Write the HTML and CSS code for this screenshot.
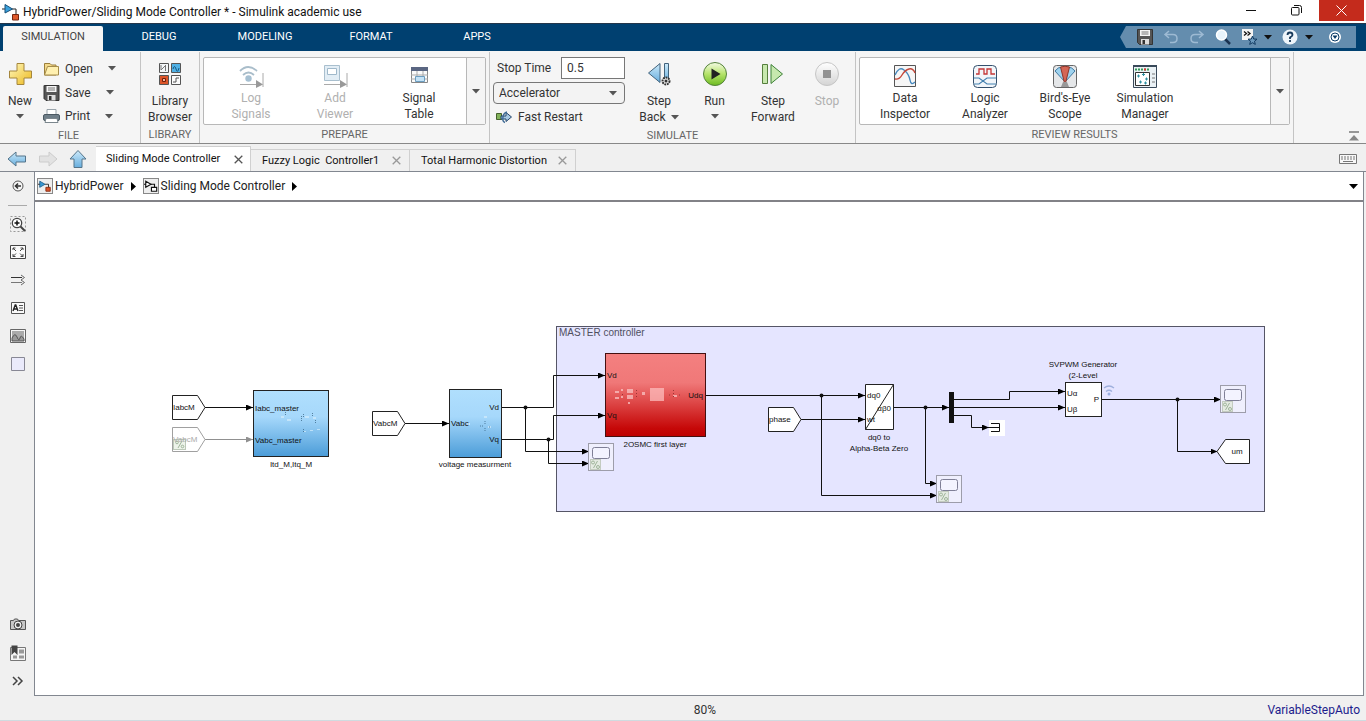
FILE: index.html
```html
<!DOCTYPE html>
<html lang="en">
<head>
<meta charset="utf-8">
<title>HybridPower/Sliding Mode Controller * - Simulink academic use</title>
<link rel="stylesheet" href="styles.css">
</head>
<body>
<svg class="defs" aria-hidden="true">
  <defs>
    <linearGradient id="gBlue" x1="0" y1="0" x2="0" y2="1"><stop offset="0" stop-color="#b0dffd"/><stop offset=".4" stop-color="#a6d8fb"/><stop offset="1" stop-color="#4b9cd8"/></linearGradient>
    <linearGradient id="gRed" x1="0" y1="0" x2="0" y2="1"><stop offset="0" stop-color="#f48080"/><stop offset=".35" stop-color="#f07878"/><stop offset=".9" stop-color="#c60808"/><stop offset="1" stop-color="#bd0000"/></linearGradient>
    <linearGradient id="gGold" x1="0" y1="0" x2="1" y2="1"><stop offset="0" stop-color="#fff9c0"/><stop offset="1" stop-color="#ecb81c"/></linearGradient>
    <linearGradient id="gArrow" x1="0" y1="0" x2="0" y2="1"><stop offset="0" stop-color="#cdeafa"/><stop offset="1" stop-color="#67aede"/></linearGradient>
    <linearGradient id="gRun" x1="0" y1="0" x2="0" y2="1"><stop offset="0" stop-color="#f4fbe4"/><stop offset=".5" stop-color="#b5e36a"/><stop offset="1" stop-color="#6dbb20"/></linearGradient>
    <linearGradient id="gGray" x1="0" y1="0" x2="0" y2="1"><stop offset="0" stop-color="#fff"/><stop offset="1" stop-color="#d4d4d4"/></linearGradient>
    <symbol id="floppy" viewBox="0 0 16 16"><path d="M1 .5h14.500v15H2.500L.5 13.500V.5z" fill="#555" stroke="#333"/><path d="M3 1h10v6H3z" fill="#f4f4f4"/><path d="M4.500 3h7M4.500 5h7" stroke="#777"/><path d="M4 10h8v5.500H4z" fill="#ddd"/><path d="M5.500 11h2.500v4h-2.500z" fill="#333"/></symbol>
    <symbol id="caret" viewBox="0 0 8 5"><path d="M0 0h8L4 4.500z" fill="currentColor"/></symbol>
    <symbol id="x" viewBox="0 0 9 9"><path d="M.7.700l7.600 7.600M8.300.700L.7 8.300" stroke="currentColor" stroke-width="1.300"/></symbol>
    <symbol id="model" viewBox="0 0 16 16"><path d="M2 2.500L8 6l-6 3.500z" fill="#3a9ad4" stroke="#1c5e8c"/><path d="M0 6h2M8 6h4v4" fill="none" stroke="#222"/><path d="M9 9.500h5V14H9z" fill="#d9532c" stroke="#822b10"/></symbol>
    <symbol id="scope" viewBox="0 0 26 29"><rect x=".5" y=".5" width="25" height="27" fill="#efeffd" stroke="#9d9daa"/><rect x="4.500" y="4.500" width="17" height="11" rx="2" fill="#f3f3ff" stroke="#7f7f96"/><rect x="2.500" y="16.500" width="10" height="10" fill="#e4eae2" stroke="#c3cbc0"/><path d="M9.500 18l-4 7" stroke="#9fb59a"/><circle cx="5" cy="19.500" r="1.500" fill="none" stroke="#9fb59a"/><circle cx="10" cy="24" r="1.500" fill="none" stroke="#9fb59a"/></symbol>
    <marker id="head" viewBox="0 0 7 6" refX="7" refY="3" markerWidth="7" markerHeight="6" markerUnits="userSpaceOnUse" orient="auto"><path d="M0 0l7 3-7 3z"/></marker>
    <marker id="headDim" viewBox="0 0 7 6" refX="7" refY="3" markerWidth="7" markerHeight="6" markerUnits="userSpaceOnUse" orient="auto"><path d="M0 0l7 3-7 3z" fill="#909090"/></marker>
  </defs>
</svg>
<div class="app">
  <header class="titlebar">
    <svg class="app-icon" viewBox="0 0 18 18" aria-hidden="true"><path d="M0 6h4M10 6h4v6" fill="none" stroke="#222"/><path d="M3 1.500L10.500 6 3 10z" fill="#39a0dc" stroke="#174f77"/><path d="M10.500 11.500h6V17h-6z" fill="#e05a2c" stroke="#752610"/></svg>
    <h1 class="title">HybridPower/Sliding Mode Controller * - Simulink academic use</h1>
    <div class="window-buttons">
      <button class="win" aria-label="Minimize"><svg width="11" height="11"><path d="M0 5.500h10" stroke="#111"/></svg></button>
      <button class="win" aria-label="Restore"><svg width="11" height="11" fill="none" stroke="#111"><rect x=".5" y="2.500" width="7.500" height="7.500" rx="1"/><path d="M3 .5h5.500q2 0 2 2V8"/></svg></button>
      <button class="win win-close" aria-label="Close"><svg width="11" height="11"><path d="M.5.500l10 10M10.500.500l-10 10" stroke="#fff"/></svg></button>
    </div>
  </header>

  <nav class="tabs" aria-label="Toolstrip">
    <button class="tab tab-active">SIMULATION</button>
    <button class="tab">DEBUG</button>
    <button class="tab">MODELING</button>
    <button class="tab">FORMAT</button>
    <button class="tab">APPS</button>
    <div class="quick">
      <button class="q" aria-label="Save"><svg width="16" height="16"><use href="#floppy"/></svg></button>
      <button class="q" aria-label="Undo"><svg width="16" height="16" fill="none" stroke="#9dbad3" stroke-width="1.500"><path d="M6 2L2 5.500 6 9M2 5.500h8q4 0 4 4t-4 4H7"/></svg></button>
      <button class="q" aria-label="Redo"><svg width="16" height="16" fill="none" stroke="#9dbad3" stroke-width="1.500"><path d="M10 2l4 3.500L10 9M14 5.500H6q-4 0-4 4t4 4h3"/></svg></button>
      <button class="q" aria-label="Search"><svg width="16" height="16"><path d="M10 10l5 5" stroke="#1b3350" stroke-width="2.500"/><circle cx="6.500" cy="6" r="5" fill="#e8f4fc" stroke="#fff" stroke-width="1.500"/></svg></button>
      <button class="q q-menu" aria-label="Favorites"><svg width="16" height="16"><path d="M1 0h11v11H1z" fill="#f4f4f4"/><path d="M3 2.500l2.500 2L3 6.500M6.500 2.500l2.500 2-2.500 2" fill="none" stroke="#111" stroke-width="1.300"/><path d="M11.500 7l1.200 3 3.300.200-2.500 2 .8 3.200-2.800-1.700-2.800 1.700.8-3.200-2.500-2 3.300-.2z" fill="#6c9abd" stroke="#123a60"/></svg><svg class="caret dark"><use href="#caret"/></svg></button>
      <button class="q q-menu" aria-label="Help"><svg width="16" height="16"><circle cx="8" cy="8" r="7.500" fill="#eef5fa"/><path d="M5.500 6q0-2.500 2.500-2.500T10.500 6Q10.500 7 8 8.500V10M8 11v2" fill="none" stroke="#173a5b" stroke-width="1.800"/></svg><svg class="caret dark"><use href="#caret"/></svg></button>
      <button class="q" aria-label="Toolstrip options"><svg width="14" height="14"><circle cx="7" cy="7" r="6" fill="#fff"/><circle cx="7" cy="7" r="4" fill="#fff" stroke="#0a3a66"/><path d="M4.500 5.500h5L7 9z" fill="#0a3a66"/></svg></button>
    </div>
  </nav>

  <section class="ribbon">
    <div class="group g-file">
      <div class="group-body">
        <button class="big new"><svg class="ico" viewBox="0 0 26 26"><path d="M10 2.500h7V10h7.500v7H17v6.500h-7V17H2.500v-7H10z" fill="url(#gGold)" stroke="#a5863c"/></svg><span>New</span><svg class="caret"><use href="#caret"/></svg></button>
        <div class="rows">
          <button class="row"><svg width="17" height="16"><path d="M1.500 14V2.500H7L8.500 4H13v10z" fill="#f3d98a" stroke="#9b7f3b"/><path d="M4.500 5.500h11V14H1.500z" fill="#fff0b0" stroke="#a58c4b"/></svg><span>Open</span><svg class="caret"><use href="#caret"/></svg></button>
          <button class="row"><svg width="17" height="16"><use href="#floppy"/></svg><span>Save</span><svg class="caret"><use href="#caret"/></svg></button>
          <button class="row"><svg width="17" height="16"><path d="M4 1.500h9V7H4z" fill="#fff" stroke="#98a3aa"/><rect x=".5" y="6.500" width="16" height="6" rx="1.500" fill="#6f7e88" stroke="#4b5962"/><path d="M3 10.500h11l1 4H2z" fill="#fff" stroke="#7b868d"/></svg><span>Print</span><svg class="caret"><use href="#caret"/></svg></button>
        </div>
      </div>
      <h2 class="caption">FILE</h2>
    </div>
    <div class="group g-library">
      <div class="group-body center">
        <button class="big"><svg class="ico" viewBox="0 0 26 26"><g stroke="#555"><path d="M2.500 2.500h9v9h-9z" fill="#f3f6f8"/><path d="M14.500 2.500h9v9h-9z" fill="#4fb0e4"/><path d="M2.500 14.500h9v9h-9z" fill="#dc5529"/><path d="M14.500 14.500h9v9h-9z" fill="#fbfbfb"/></g><g fill="none"><path d="M4 4v5l5-5M8.500 4v6" stroke="#777"/><path d="M16 8q1.500-5 3 0t3-1" stroke="#15557e"/><path d="M5.500 17.500h3v3h-3z" fill="#f6b39a" stroke="#701e08"/><path d="M16 21h3v-4h3" stroke="#555"/></g></svg><span>Library<br>Browser</span></button>
      </div>
      <h2 class="caption">LIBRARY</h2>
    </div>
    <div class="group g-prepare">
      <div class="gallery">
        <div class="gallery-items prepare-items">
          <button class="item" disabled><svg class="ico" viewBox="0 0 26 26"><g fill="none" stroke="#a9bdca" stroke-width="1.800"><path d="M2 7q8-8 17 0M5 11q5.500-5 11 0"/></g><circle cx="10.500" cy="14.500" r="3.200" fill="#a6c0d2"/><path d="M2 20.500h22M25 9v14" stroke="#aaa"/><path d="M18 16l7 4.500-7 3.500z" fill="#999"/></svg><span>Log<br>Signals</span></button>
          <button class="item" disabled><svg class="ico" viewBox="0 0 26 26"><path d="M2.500 1.500h15v15h-15z" fill="#e2edf5" stroke="#a9bfce"/><path d="M5.500 4.500h9v6h-9z" fill="#fff" stroke="#9fb8ca"/><path d="M2 20.500h22M25 9v14" stroke="#aaa"/><path d="M18 16l7 4.500-7 3.500z" fill="#999"/></svg><span>Add<br>Viewer</span></button>
          <button class="item"><svg class="ico" viewBox="0 0 26 26"><path d="M5.500 3.500h16v15h-16z" fill="#fafafa" stroke="#888"/><path d="M5 3h17v4H5z" fill="#5a6682"/><path d="M5 11h17M5 15h17M11 7v11M17 7v11" stroke="#aaa"/><path d="M9.500 12.500h9v5h-9z" fill="#c4e2f6" stroke="#6c9dbf"/></svg><span>Signal<br>Table</span></button>
        </div>
        <button class="more" aria-label="More prepare tools"><svg class="caret"><use href="#caret"/></svg></button>
      </div>
      <h2 class="caption">PREPARE</h2>
    </div>
    <div class="group g-simulate">
      <div class="group-body">
        <div class="settings">
          <div class="field"><label for="stop">Stop Time</label><input id="stop" type="text" value="0.5"></div>
          <div class="select-wrap"><select aria-label="Simulation mode"><option>Accelerator</option></select><svg class="caret"><use href="#caret"/></svg></div>
          <button class="fast"><svg width="16" height="14"><path d="M.5 3.500h5v6h-5z" fill="#83b35a" stroke="#45612d"/><path d="M5 6h5V2.500L15.500 7 10 11.500V9H5z" fill="#a6c9e4" stroke="#24466b"/><path d="M9 12.500q-3-1-2-5.500.500-4 4-5" fill="none" stroke="#3d6a96" stroke-width="1.400"/></svg><span>Fast Restart</span></button>
        </div>
        <button class="big step"><svg class="ico" viewBox="0 0 26 26"><path d="M14 2.500v19L2.500 12z" fill="url(#gArrow)" stroke="#42637c"/><path d="M18.500 2.500h4v18h-4z" fill="url(#gArrow)" stroke="#42637c"/><circle cx="20" cy="20" r="3.500" fill="#eee" stroke="#333" stroke-width="2" stroke-dasharray="1.800 .8"/><circle cx="20" cy="20" r="1.500" fill="#333"/></svg><span>Step<br>Back <svg class="caret"><use href="#caret"/></svg></span></button>
        <button class="big run"><svg class="ico" viewBox="0 0 26 26"><circle cx="13" cy="13" r="11.500" fill="url(#gRun)" stroke="#55833c"/><path d="M9.500 7.500l9 5.500-9 5.500z" fill="#222"/></svg><span>Run</span><svg class="caret"><use href="#caret"/></svg></button>
        <button class="big step-fwd"><svg class="ico" viewBox="0 0 26 26"><path d="M2.500 3.500h5v19h-5z" fill="#c7e8ae" stroke="#557f3d"/><path d="M11 3.500v19L22.500 13z" fill="#c7e8ae" stroke="#3d8138"/></svg><span>Step<br>Forward</span></button>
        <button class="big stop" disabled><svg class="ico" viewBox="0 0 26 26"><circle cx="13" cy="13" r="11.500" fill="url(#gGray)" stroke="#c6c6c6"/><path d="M9 9h8v8H9z" fill="#929292"/></svg><span>Stop</span></button>
      </div>
      <h2 class="caption">SIMULATE</h2>
    </div>
    <div class="group g-review">
      <div class="gallery">
        <div class="gallery-items review-items">
          <button class="item"><svg class="ico" viewBox="0 0 26 26"><path d="M2.500 1.500h21v21h-21z" fill="#f6f6f6" stroke="#555"/><path d="M3 11q4-9 9-5t6 10 5 2" fill="none" stroke="#4688bd" stroke-width="1.400"/><path d="M3 15q4 1 7-4t7-6 6 4" fill="none" stroke="#c3473a" stroke-width="1.400"/></svg><span>Data<br>Inspector</span></button>
          <button class="item"><svg class="ico" viewBox="0 0 26 26"><rect x="1.500" y="1.500" width="23" height="22" rx="4" fill="#f2f6fa" stroke="#34506d"/><path d="M4 10h3V5h5v5h3V5h4v5h4" fill="none" stroke="#c43737" stroke-width="1.300"/><path d="M2 14h5l8 6h9M2 20h5l8-6h9" fill="none" stroke="#4581b0" stroke-width="1.200"/></svg><span>Logic<br>Analyzer</span></button>
          <button class="item"><svg class="ico" viewBox="0 0 26 26"><rect x="1.500" y="1.500" width="23" height="22" rx="3" fill="#e5e7e9" stroke="#666"/><path d="M3 7q3-4 7-4l3 15z" fill="#9ed2ee" stroke="#427aa1"/><path d="M23 7q-3-4-7-4l-3 15z" fill="#9ed2ee" stroke="#427aa1"/><path d="M8.500 3q4.500-1.500 9 0l-4 16h-1z" fill="#d46655" stroke="#8d3529"/><path d="M11 18h4l2 5h-8z" fill="#999"/></svg><span>Bird's-Eye<br>Scope</span></button>
          <button class="item"><svg class="ico" viewBox="0 0 26 26"><path d="M1.500 1.500h23v22h-23z" fill="#eaf1f5" stroke="#39495a"/><path d="M1 1h24v2H1z" fill="#39495a"/><path d="M3 5.500h15" stroke="#339955" stroke-width="2" stroke-dasharray="2 1"/><path d="M12 4.500h2v2h-2z" fill="#d33"/><path d="M3.500 8.500h14v13h-14z" fill="#fff" stroke="#333"/><path d="M5 12h3M6.500 10.500v3M10 10.500h3M11.500 9v3M13 15h3M14.500 13.500v3M7 18h3M8.500 16.500v3M12 19h3M13.500 17.500v3" stroke="#2e8fa0"/><path d="M20 10h3M20 14h3M20 18h3" stroke="#777"/></svg><span>Simulation<br>Manager</span></button>
        </div>
        <button class="more" aria-label="More review tools"><svg class="caret"><use href="#caret"/></svg></button>
      </div>
      <h2 class="caption">REVIEW RESULTS</h2>
    </div>
    <button class="collapse" aria-label="Collapse toolstrip"><svg width="10" height="10"><path d="M0 1h10" stroke="#777" stroke-width="1.500"/><path d="M0 9.500h10L5 4z" fill="#888"/></svg></button>
  </section>

  <div class="docbar">
    <div class="history">
      <button aria-label="Back"><svg width="20" height="16"><path d="M1 8l8-7v4h9.500v6H9v4z" fill="url(#gArrow)" stroke="#55748a"/></svg></button>
      <button aria-label="Forward" disabled><svg width="20" height="16"><path d="M19 8l-8-7v4H1.500v6H11v4z" fill="#e2e2e2" stroke="#ccc"/></svg></button>
      <button aria-label="Up"><svg width="18" height="18"><path d="M9 .5l8 8.500h-4v8.500H5V9H1z" fill="url(#gArrow)" stroke="#55748a"/></svg></button>
    </div>
    <div class="docs">
      <div class="doc doc-active"><a href="#sliding">Sliding Mode Controller</a><button aria-label="Close Sliding Mode Controller"><svg width="9" height="9"><use href="#x"/></svg></button></div>
      <div class="doc"><a href="#fuzzy">Fuzzy Logic&nbsp; Controller1</a><button aria-label="Close Fuzzy Logic Controller1"><svg width="9" height="9"><use href="#x"/></svg></button></div>
      <div class="doc"><a href="#thd">Total Harmonic Distortion</a><button aria-label="Close Total Harmonic Distortion"><svg width="9" height="9"><use href="#x"/></svg></button></div>
    </div>
    <button class="keyboard" aria-label="Keyboard shortcuts"><svg width="18" height="10"><path d="M.5.500h17v9H.5z" fill="#f8f8f8" stroke="#777"/><path d="M2 3h14M2 5h14" stroke="#777" stroke-dasharray="2 1"/><path d="M4 7.500h10" stroke="#777"/></svg></button>
  </div>

  <div class="work">
    <aside class="rail" aria-label="Palette">
      <button aria-label="Hide browser"><svg width="16" height="16"><circle cx="8" cy="8" r="5" fill="#f6f6f6" stroke="#555"/><path d="M11 8H6M8 5.500L5.500 8 8 10.500" fill="none" stroke="#333" stroke-width="1.600"/></svg></button>
      <hr>
      <button aria-label="Zoom"><svg width="16" height="16"><path d="M.5.500h15v15H.5z" fill="none" stroke="#999" stroke-dasharray="2 2"/><circle cx="7" cy="7" r="4.700" fill="#fff" stroke="#444" stroke-width="1.300"/><path d="M4.500 7h5M7 4.500v5" stroke="#111" stroke-width="1.500"/><path d="M10.500 10.500L15 15" stroke="#444" stroke-width="2"/></svg></button>
      <button aria-label="Fit to view"><svg width="16" height="16" fill="none" stroke="#444"><path d="M.5 1.500h15v13H.5z" fill="#fbfbfb"/><path d="M3 6V4h2.500M3 4l3 3M13 6V4h-2.500M13 4l-3 3M3 10v2.500h2.500M3 12.500l3-3M13 10v2.500h-2.500M13 12.500l-3-3"/></svg></button>
      <button aria-label="Signal"><svg width="16" height="16" fill="none" stroke="#333"><path d="M1 5.500h11"/><path d="M1 10.500h11" stroke="#777"/><path d="M11 3l3.500 2.500L11 8M11 8l3.500 2.500L11 13" stroke="#666"/></svg></button>
      <button class="annot" aria-label="Annotation"><svg width="16" height="16"><path d="M1.500 2.500h13v11h-13z" fill="#fafafa" stroke="#555"/><path d="M3 11l2.200-6h.6L8 11M4 9h3" fill="none" stroke="#222" stroke-width="1.400"/><path d="M9 5.500h4M9 8h4M9 10.500h4" stroke="#555"/></svg></button>
      <button aria-label="Image"><svg width="16" height="16"><path d="M.5 1.500h15v13H.5z" fill="#f6f6f6" stroke="#666"/><path d="M2 3h12v10H2z" fill="#aaa"/><path d="M2 10q3-6 5-1t3 1 4 1v2H2z" fill="#999" stroke="#555"/></svg></button>
      <button aria-label="Area"><svg width="16" height="16"><path d="M1.500 1.500h13v13h-13z" fill="#eaeafb" stroke="#888895"/></svg></button>
      <span class="spacer"></span>
      <button aria-label="Screenshot"><svg width="16" height="16"><path d="M.5 3.500h3l1-1.500h3l1 1.500h7v9H.5z" fill="#c7c7c7" stroke="#555"/><circle cx="8" cy="8" r="4" fill="#eee" stroke="#444"/><circle cx="8" cy="8" r="2" fill="#444"/></svg></button>
      <button aria-label="Bookmarks"><svg width="16" height="16"><path d="M.5 2.500h15v13H.5z" fill="#f5f5f5" stroke="#777"/><path d="M9 4.500h5v4H9zM3 10.500h4v3H3zM9 10.500h5v3H9z" fill="#999"/><path d="M1.500.500h6V10l-3-3-3 3z" fill="#444"/></svg></button>
      <button aria-label="More"><svg width="16" height="16" fill="none" stroke="#444" stroke-width="1.500"><path d="M3 4l4 4-4 4M8 4l4 4-4 4"/></svg></button>
    </aside>
    <main class="editor">
      <nav class="crumbs" aria-label="Model path">
        <a href="#root"><span class="crumb-icon"><svg width="14" height="14"><use href="#model"/></svg></span>HybridPower</a>
        <svg class="crumb-sep" width="5" height="9"><path d="M0 0l5 4.500L0 9z"/></svg>
        <a href="#sliding"><span class="crumb-icon"><svg width="14" height="14" viewBox="0 0 16 16" fill="#fff" stroke="#111" stroke-width="1.300"><path d="M2 2.500L8 6l-6 3.500zM0 6h2"/><path d="M8 6h4v4" fill="none"/><path d="M8.500 9.500h6V14h-6z"/></svg></span>Sliding Mode Controller</a>
        <svg class="crumb-sep" width="5" height="9"><path d="M0 0l5 4.500L0 9z"/></svg>
        <button class="crumb-menu" aria-label="Path history"><svg width="9" height="5"><path d="M0 0h9L4.500 5z"/></svg></button>
      </nav>
      <div class="canvas">
        <svg class="diagram" role="img" aria-label="Sliding Mode Controller block diagram">
          <g transform="translate(-35 -202)">
            <rect class="area" x="556.500" y="326.500" width="708" height="185"/>
            <text class="area-title" x="559" y="336">MASTER controller</text>

            <g class="wire">
              <path d="M405 423.500h44" marker-end="url(#head)"/>
              <path d="M205 407.500h48" marker-end="url(#head)"/>
              <path d="M205 439.500h48" class="dim" marker-end="url(#headDim)"/>
              <path d="M501 407.500h52.500v-32H605" marker-end="url(#head)"/>
              <path d="M525.500 407.500v44H589" marker-end="url(#head)"/>
              <path d="M501 439.500h52.500v-24H605" marker-end="url(#head)"/>
              <path d="M548.500 439.500v24H589" marker-end="url(#head)"/>
              <path d="M705 395.500h160" marker-end="url(#head)"/>
              <path d="M821.500 395.500v100H937" marker-end="url(#head)"/>
              <path d="M801 419.500h64" marker-end="url(#head)"/>
              <path d="M893 407.500h56" marker-end="url(#head)"/>
              <path d="M925.500 407.500v76H937" marker-end="url(#head)"/>
              <path d="M953 399.500h56.500v-8H1065" marker-end="url(#head)"/>
              <path d="M953 407.500h112" marker-end="url(#head)"/>
              <path d="M953 415.500h18.500v12H989" marker-end="url(#head)"/>
              <path d="M1101 399.500h120" marker-end="url(#head)"/>
              <path d="M1177.500 399.500v52h40" marker-end="url(#head)"/>
            </g>
            <g><circle cx="525.500" cy="407.500" r="2"/><circle cx="548.500" cy="439.500" r="2"/><circle cx="821.500" cy="395.500" r="2"/><circle cx="925.500" cy="407.500" r="2"/><circle cx="1177.500" cy="399.500" r="2"/></g>

            <g class="block">
              <path d="M172.500 395.500h25l7.500 12-7.500 12h-25z"/>
              <path class="dim" d="M172.500 427.500h25l7.500 12-7.500 12h-25z"/>
              <path d="M372.500 411.500h25l7.500 12-7.500 12h-25z"/>
              <path d="M768.500 407.500h25l7.500 12-7.500 12h-25z"/>
              <path d="M1249.500 439.500h-24l-8.500 12 8.500 12h24z"/>
              <rect class="blue" x="253.500" y="390.500" width="75" height="66"/>
              <rect class="blue" x="449.500" y="389.500" width="52" height="68"/>
              <rect class="red" x="605.500" y="353.500" width="100" height="83"/>
              <path d="M865.500 384.500h28v45h-28zM865.500 429.500l28-45"/>
              <rect x="1065.500" y="382.500" width="36" height="34"/>
            </g>
            <rect x="949" y="392" width="5" height="31"/>
            <rect x="989" y="420" width="16" height="16" fill="#fff"/>
            <path d="M991 423.500h8.500v8H991M989 427.500h10" fill="none" stroke="#111"/>

            <g><rect x="173.500" y="439.500" width="12" height="10" fill="#edf3ea" stroke="#bdc9b9"/><path d="M182 441l-4 7" stroke="#9fb59a"/><circle cx="177" cy="442.500" r="1.300" fill="none" stroke="#9fb59a"/><circle cx="182.500" cy="446.500" r="1.300" fill="none" stroke="#9fb59a"/></g>
            <g class="preview">
              <path d="M281 416h3v2h-3zM287 419h4v2h-4zM305 416h4v2h-4zM313 417h3v2h-3zM303 431h3v1h-3zM310 430h3v1h-3zM317 429h3v1h-3zM467 423h3v2h-3zM484 416h3v2h-3zM488 426h3v2h-3z" fill="#d4edfc"/>
              <path d="M285.500 412v4M301.500 416v6M303.500 414v4M312.500 413v4M315.500 420v3M303.500 429v4M480 426h3M485 421v3M485 428v3M489 427h2" stroke="#315d7c" stroke-dasharray="1 1"/>
              <path d="M615 391h4v2h-4zM615 397h4v2h-4zM621 389h2v2h-2zM621 396h2v2h-2zM627 389h6v4h-6zM627 395h6v4h-6zM628 402h2v2h-2zM642 392h3v3h-3zM673 395h4v2h-4z" fill="#fbcaca"/><rect x="650" y="388" width="14" height="13" fill="#ffc4c4"/>
              <path d="M636.500 390v9M622.500 394v2M673.500 390v8M669 395h3M679 395h2" stroke="#7c2424" stroke-dasharray="1 2"/>
            </g>
            <use href="#scope" x="588" y="443" width="26" height="29"/>
            <use href="#scope" x="936" y="475" width="26" height="29"/>
            <use href="#scope" x="1220" y="385" width="26" height="29"/>
            <path d="M1104 388q5-4 10 0M1106 391.500q3-2.500 6 0" fill="none" stroke="#9fb0dd" stroke-width="1.300"/><circle cx="1109" cy="394" r="1.500" fill="#9aaee0"/>

            <g class="labels">
              <text x="173" y="410">IabcM</text>
              <text x="173" y="442" class="faint">VabcM</text>
              <text x="255" y="411">Iabc_master</text>
              <text x="255" y="443">Vabc_master</text>
              <text x="291" y="467" class="mid">Itd_M,Itq_M</text>
              <text x="373" y="426">VabcM</text>
              <text x="451" y="426">Vabc</text>
              <text x="499" y="410" class="end">Vd</text>
              <text x="499" y="442" class="end">Vq</text>
              <text x="475" y="467" class="mid">voltage measurment</text>
              <text x="607" y="378">Vd</text>
              <text x="607" y="418">Vq</text>
              <text x="703" y="398" class="end">Udq</text>
              <text x="655" y="447" class="mid">2OSMC first layer</text>
              <text x="769" y="422">phase</text>
              <text x="867" y="398">dq0</text>
              <text x="891" y="411" class="end">αβ0</text>
              <text x="867" y="422">wt</text>
              <text x="879" y="440" class="mid">dq0 to</text>
              <text x="879" y="451" class="mid">Alpha-Beta Zero</text>
              <text x="1083" y="367" class="mid">SVPWM Generator</text>
              <text x="1083" y="378" class="mid">(2-Level</text>
              <text x="1067" y="396">Uα</text>
              <text x="1067" y="412">Uβ</text>
              <text x="1099" y="402" class="end">P</text>
              <text x="1237" y="454" class="mid">um</text>
            </g>
          </g>
        </svg>
      </div>
    </main>
  </div>

  <footer class="status"><span></span><span>80%</span><a href="#solver">VariableStepAuto</a></footer>
</div>
</body>
</html>
```

FILE: styles.css
```css
* { box-sizing: border-box; }
body { margin: 0; font: 12px/16px Roboto, "Open Sans", sans-serif; color: #333; }
button, input, select { font: inherit; color: inherit; }
button { border: 0; padding: 0; background: none; }
a { color: inherit; text-decoration: none; }
h1, h2 { margin: 0; font-weight: 400; }
svg { display: block; flex: none; }
.defs { position: absolute; width: 0; height: 0; }
.caret { width: 8px; height: 5px; color: #555; }
.dark { color: #111; }

.app { display: flex; flex-direction: column; height: 100vh; background: #f0f0f0; }

.titlebar { display: flex; align-items: center; height: 23px; padding-left: 2px; background: #fff; color: #111; flex: none; }
.app-icon { width: 18px; height: 18px; }
.title { margin-left: 3px; font-size: 12px; flex: 1; }
.window-buttons { display: flex; align-self: flex-start; }
.win { display: grid; place-items: center; width: 45px; height: 21px; }
.win-close { background: #c42b1c; margin-right: 2px; }

.tabs { display: flex; align-items: flex-end; height: 28px; padding-left: 3px; background: #004070; border-top: 1px solid #24364a; color: #fff; flex: none; }
.tab { width: 106px; height: 25px; padding-bottom: 3px; font-size: 11px; }
.tab-active { width: 100px; margin-right: 3px; background: #f5f5f5; color: #444; border-radius: 2px 2px 0 0; }
.quick { display: flex; align-items: center; gap: 10px; height: 22px; margin: 0 10px 3px auto; padding: 0 14px 0 17px; background: #648dae; clip-path: polygon(6px 0, 100% 0, 100% 100%, 6px 100%, 0 50%); }
.q-menu { display: flex; align-items: center; gap: 7px; }
.quick .q:last-child { margin-left: 5px; }

.ribbon { display: flex; height: 93px; background: #f5f5f5; border-bottom: 1px solid #888; flex: none; }
.group { display: flex; flex-direction: column; padding: 5px 3px 0; margin-top: 1px; border-right: 1px solid #c4c4c4; }
.group-body { display: flex; height: 71px; }
.center { justify-content: center; }
.caption { font-size: 11px; line-height: 16px; text-align: center; color: #666; margin-top: auto; }
.g-file { width: 141px; padding-left: 0; }
.g-library { width: 59px; }
.g-prepare { width: 290px; }
.g-simulate { width: 366px; }
.g-review { width: 438px; }
.big { display: flex; flex-direction: column; align-items: center; padding-top: 4px; }
.big > span { margin-top: 6px; }
.big > .caret { margin-top: 5px; }
.big span .caret { display: inline-block; vertical-align: middle; margin-left: 2px; }
.ico { width: 26px; height: 26px; }
.new { width: 40px; }
.rows { display: flex; flex-direction: column; }
.row { display: flex; align-items: center; height: 24px; padding-left: 3px; }
.row span { margin: 0 15px 0 5px; }
.gallery { display: flex; height: 68px; background: #fff; border: 1px solid #b8b8b8; border-radius: 2px; }
.gallery-items { display: flex; flex: 1; padding-left: 5px; }
.item { display: flex; flex-direction: column; align-items: center; width: 84px; padding-top: 6px; }
.review-items .item { width: 80px; }
button:disabled { color: #b0b0b0; }
.more { display: grid; place-items: center; width: 19px; background: #f5f5f5; border-left: 1px solid #b8b8b8; }
.settings { display: flex; flex-direction: column; width: 132px; margin-right: 7px; }
.field { display: flex; align-items: center; justify-content: space-between; height: 22px; padding-left: 4px; }
.field input { width: 64px; height: 22px; padding: 0 5px; border: 1px solid #777; background: #fff; }
.select-wrap { display: grid; align-items: center; margin-top: 3px; }
.select-wrap > * { grid-area: 1 / 1; }
.select-wrap select { appearance: none; height: 22px; padding: 0 5px; border: 1px solid #777; border-radius: 4px; background: #f3f3f3; }
.select-wrap .caret { justify-self: end; margin-right: 8px; pointer-events: none; }
.fast { display: flex; align-items: center; gap: 6px; height: 24px; padding-left: 3px; margin-top: 2px; }
.step { width: 54px; }
.run { width: 57px; }
.step-fwd { width: 60px; }
.stop { width: 48px; }
.collapse { margin: auto 7px 2px auto; }

.docbar { display: flex; height: 28px; border-bottom: 1px solid #828790; background: #f0f0f0; flex: none; }
.history { display: flex; align-items: center; gap: 11px; width: 96px; padding-left: 7px; padding-top: 3px; }
.docs { display: flex; align-items: flex-end; color: #111; }
.doc { display: flex; align-items: center; justify-content: space-between; width: 159px; height: 22px; padding: 0 8px 0 11px; border: 1px solid #d0d0d0; border-width: 1px 1px 0 0; font-size: 11px; color: #111; }
.doc button { color: #999; }
.doc-active { width: 155px; height: 25px; padding: 0 7px 0 10px; background: #fff; }
.doc-active button { color: #555; }
.doc + .doc + .doc { width: 166px; }
.keyboard { margin: 3px 9px 0 auto; }

.work { display: flex; flex: 1; min-height: 0; }
.rail { display: flex; flex-direction: column; align-items: center; gap: 12px; width: 35px; padding: 6px 0 7px 1px; border-right: 1px solid #828790; }
.rail hr { width: 19px; margin: -1px 0 -2px; border: 0; border-top: 1px solid #aaa; }
.rail .spacer { flex: 1; }
.editor { display: flex; flex-direction: column; flex: 1; min-width: 0; margin-right: 2px; border-right: 1px solid #828790; background: #fff; }
.crumbs { display: flex; align-items: center; gap: 7px; height: 30px; padding: 0 5px 0 2px; border-bottom: 2px solid #828287; color: #222; flex: none; }
.crumbs a { display: flex; align-items: center; gap: 2px; }
.crumb-icon { display: grid; place-items: center; width: 16px; height: 16px; border: 1px solid #888; background: #eee; }
.crumb-menu { margin-left: auto; }
.canvas { flex: 1; min-height: 0; border-bottom: 1px solid #828790; }

.diagram { width: 100%; height: 100%; font: 8px "Liberation Sans", Arial, sans-serif; fill: #111; }
.area { fill: #e5e5ff; stroke: #555566; }
.area-title { font-size: 10px; fill: #50505f; }
.wire path { fill: none; stroke: #111; }
.wire .dim { stroke: #909090; }
.block > * { fill: #fff; stroke: #222; }
.block .dim { stroke: #a0a0a0; }
.block .blue { fill: url(#gBlue); }
.block .red { fill: url(#gRed); stroke: #451010; }
.preview { opacity: .7; }
.faint { fill: #aaa; }
.mid { text-anchor: middle; }
.end { text-anchor: end; }

.status { display: grid; grid-template-columns: 1fr auto 1fr; align-items: center; height: 25px; padding: 3px 6px 0 50px; border-bottom: 1px solid #cfdbe0; flex: none; }
.status a { justify-self: end; color: #1c1c8c; }
```
